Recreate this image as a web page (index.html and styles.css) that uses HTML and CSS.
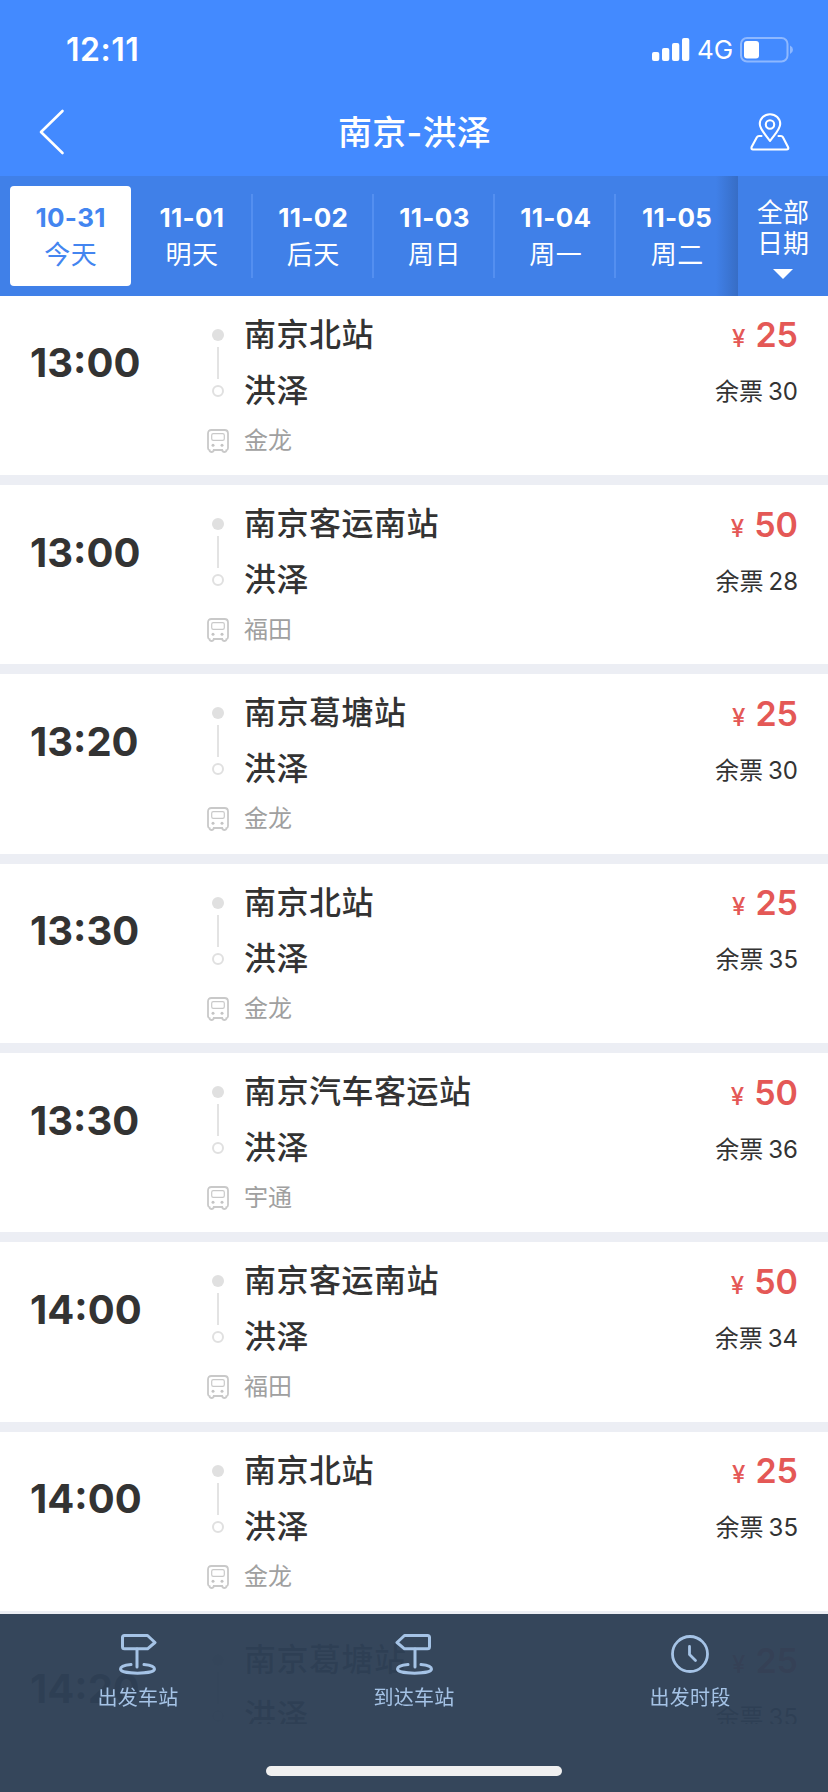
FILE: index.html
```
<!DOCTYPE html>
<html lang="zh-CN">
<head>
  <meta charset="UTF-8" />
  <meta name="viewport" content="width=device-width, initial-scale=1.0" />
  <title>南京-洪泽</title>
  <link rel="stylesheet" href="styles.css">
</head>
<body>
  <svg class="sprite">
    <symbol id="bus" viewBox="0 0 22 24">
      <path d="M4.500 1H17.500Q21 1 21 4.500V19Q21 21 19.300 21.300V22Q18.800 23 17.500 23Q15.500 23 15.200 21H6.800Q6.500 23 4.500 23Q3.200 23 2.700 22V21.300Q1 21 1 19V4.500Q1 1 4.500 1Z" fill="none" stroke="#c9c9c9" stroke-width="1.800" />
      <rect x="4.700" y="4.700" width="12.600" height="6.600" rx="1.600" fill="none" stroke="#c9c9c9" stroke-width="1.200" />
      <circle cx="6" cy="16.300" r="1.500" fill="#c4c4c4" />
      <circle cx="15" cy="16.300" r="1.500" fill="#c4c4c4" />
    </symbol>
    <symbol id="sign" viewBox="0 0 38 42">
      <g fill="none" stroke="#a5c3e6" stroke-width="3" stroke-linecap="round" stroke-linejoin="round">
        <path d="M5.500 2.500H28.500L36 9.500L28.500 15.800H5.500Q3.500 15.800 3.500 13.800V4.500Q3.500 2.500 5.500 2.500Z" />
        <path d="M18 16V34" />
        <path d="M12 31.500C5 32 1.500 34 1.500 36C1.500 38.500 9 40.200 18.500 40.200S35.500 38.500 35.500 36C35.500 34 32 32 25 31.500" />
      </g>
    </symbol>
  </svg>

  <header class="header">
    <div class="status">
      <span class="clock">12:11</span>
      <div class="status-right">
        <svg class="signal" width="38" height="24" viewBox="0 0 38 24" fill="#fff">
          <rect x="0" y="14" width="7.300" height="9" rx="2" />
          <rect x="10" y="10" width="7.300" height="13" rx="2" />
          <rect x="20" y="5" width="7.300" height="18" rx="2" />
          <rect x="30" y="0" width="7.300" height="23" rx="2" />
        </svg>
        <span class="network">4G</span>
        <svg class="battery" width="54" height="26" viewBox="0 0 54 26">
          <rect x="1" y="1" width="46.500" height="23.500" rx="6" fill="none" stroke="#8eb8ff" stroke-width="2" />
          <rect x="4" y="4" width="15" height="17.500" rx="3" fill="#fff" />
          <path d="M50 8.500Q53 10 53 12.800T50 17Z" fill="#8eb8ff" />
        </svg>
      </div>
    </div>
    <div class="nav">
      <svg class="back" width="26" height="46" viewBox="0 0 26 46">
        <path d="M23.500 2L2 23L23.500 44" fill="none" stroke="#fff" stroke-width="2.600" stroke-linecap="round" stroke-linejoin="round" />
      </svg>
      <h1 class="title">南京-洪泽</h1>
      <svg class="map" width="40" height="38" viewBox="0 0 40 38">
        <g fill="none" stroke="#fff" stroke-width="2.100" stroke-linejoin="round" stroke-linecap="round">
          <path d="M20 28C16 22 9.800 16.500 9.800 11A10.200 9.800 0 0 1 30.200 11C30.200 16.500 24 22 20 28Z" />
          <circle cx="20" cy="11.500" r="4.200" />
          <path d="M11.500 23H9Q7.500 23 7 24L1.600 34Q1 36.500 3 36.500H36.500Q39 36.500 38 34L32.800 24Q32.300 23 31 23H28.500" />
        </g>
      </svg>
    </div>
  </header>

  <div class="dates">
    <div class="date-list">
      <div class="date active"><b>10-31</b><span>今天</span></div>
      <div class="date"><b>11-01</b><span>明天</span></div>
      <div class="date"><b>11-02</b><span>后天</span></div>
      <div class="date"><b>11-03</b><span>周日</span></div>
      <div class="date"><b>11-04</b><span>周一</span></div>
      <div class="date"><b>11-05</b><span>周二</span></div>
    </div>
    <div class="all-dates">
      <span>全部</span>
      <span>日期</span>
      <i class="arrow"></i>
    </div>
  </div>

  <main class="list">
    <div class="card">
      <div class="time">13:00</div>
      <div class="route">
        <div class="line"><i class="dot"></i><i class="bar"></i><i class="ring"></i></div>
        <div class="stations"><p>南京北站</p><p>洪泽</p></div>
        <svg class="bus" width="22" height="24"><use href="#bus" /></svg>
        <div class="brand">金龙</div>
      </div>
      <div class="ticket"><div class="price"><small>¥</small>25</div><div class="left">余票<em>30</em></div></div>
    </div>

    <div class="card">
      <div class="time">13:00</div>
      <div class="route">
        <div class="line"><i class="dot"></i><i class="bar"></i><i class="ring"></i></div>
        <div class="stations"><p>南京客运南站</p><p>洪泽</p></div>
        <svg class="bus" width="22" height="24"><use href="#bus" /></svg>
        <div class="brand">福田</div>
      </div>
      <div class="ticket"><div class="price"><small>¥</small>50</div><div class="left">余票<em>28</em></div></div>
    </div>

    <div class="card">
      <div class="time">13:20</div>
      <div class="route">
        <div class="line"><i class="dot"></i><i class="bar"></i><i class="ring"></i></div>
        <div class="stations"><p>南京葛塘站</p><p>洪泽</p></div>
        <svg class="bus" width="22" height="24"><use href="#bus" /></svg>
        <div class="brand">金龙</div>
      </div>
      <div class="ticket"><div class="price"><small>¥</small>25</div><div class="left">余票<em>30</em></div></div>
    </div>

    <div class="card">
      <div class="time">13:30</div>
      <div class="route">
        <div class="line"><i class="dot"></i><i class="bar"></i><i class="ring"></i></div>
        <div class="stations"><p>南京北站</p><p>洪泽</p></div>
        <svg class="bus" width="22" height="24"><use href="#bus" /></svg>
        <div class="brand">金龙</div>
      </div>
      <div class="ticket"><div class="price"><small>¥</small>25</div><div class="left">余票<em>35</em></div></div>
    </div>

    <div class="card">
      <div class="time">13:30</div>
      <div class="route">
        <div class="line"><i class="dot"></i><i class="bar"></i><i class="ring"></i></div>
        <div class="stations"><p>南京汽车客运站</p><p>洪泽</p></div>
        <svg class="bus" width="22" height="24"><use href="#bus" /></svg>
        <div class="brand">宇通</div>
      </div>
      <div class="ticket"><div class="price"><small>¥</small>50</div><div class="left">余票<em>36</em></div></div>
    </div>

    <div class="card">
      <div class="time">14:00</div>
      <div class="route">
        <div class="line"><i class="dot"></i><i class="bar"></i><i class="ring"></i></div>
        <div class="stations"><p>南京客运南站</p><p>洪泽</p></div>
        <svg class="bus" width="22" height="24"><use href="#bus" /></svg>
        <div class="brand">福田</div>
      </div>
      <div class="ticket"><div class="price"><small>¥</small>50</div><div class="left">余票<em>34</em></div></div>
    </div>

    <div class="card">
      <div class="time">14:00</div>
      <div class="route">
        <div class="line"><i class="dot"></i><i class="bar"></i><i class="ring"></i></div>
        <div class="stations"><p>南京北站</p><p>洪泽</p></div>
        <svg class="bus" width="22" height="24"><use href="#bus" /></svg>
        <div class="brand">金龙</div>
      </div>
      <div class="ticket"><div class="price"><small>¥</small>25</div><div class="left">余票<em>35</em></div></div>
    </div>

    <div class="card">
      <div class="time">14:20</div>
      <div class="route">
        <div class="line"><i class="dot"></i><i class="bar"></i><i class="ring"></i></div>
        <div class="stations"><p>南京葛塘站</p><p>洪泽</p></div>
      </div>
      <div class="ticket"><div class="price"><small>¥</small>25</div><div class="left">余票<em>35</em></div></div>
    </div>
  </main>

  <!-- filter bar over the list -->
  <footer class="filters">
    <div class="filter-row">
      <div class="filter">
        <svg width="38" height="42"><use href="#sign" /></svg>
        <span>出发车站</span>
      </div>
      <div class="filter">
        <svg class="flip" width="38" height="42"><use href="#sign" /></svg>
        <span>到达车站</span>
      </div>
      <div class="filter">
        <svg width="38" height="42" viewBox="0 0 38 42" fill="none" stroke="#a5c3e6" stroke-width="2.800" stroke-linecap="round" stroke-linejoin="round">
          <circle cx="19" cy="21" r="17.500" />
          <path d="M18.500 13.500V21.500L24.500 27.500" />
        </svg>
        <span>出发时段</span>
      </div>
    </div>
    <div class="home-bar"></div>
  </footer>
</body>
</html>
```
FILE: styles.css
```
* { margin: 0; padding: 0; box-sizing: border-box; }
body {
  width: 828px;
  height: 1792px;
  overflow: hidden;
  font-family: Inter, "Noto Sans CJK SC", sans-serif;
  background: #fff;
  color: #333;
}
i, em { font-style: normal; }
svg { display: block; }
.sprite { display: none; }

.header {
  height: 176px;
  background: #438aff;
  color: #fff;
}
.status {
  display: flex;
  justify-content: space-between;
  height: 88px;
  padding: 29px 34px 0 66px;
}
.clock {
  font-size: 32px;
  font-weight: 600;
  line-height: 42px;
  letter-spacing: 0.5px;
}
.status-right {
  display: flex;
  align-items: flex-start;
  padding-top: 8px;
}
.signal { margin-top: 1px; }
.network {
  width: 50px;
  text-align: center;
  font-size: 26px;
  line-height: 26px;
}
.nav {
  display: flex;
  justify-content: space-between;
  align-items: center;
  height: 88px;
  padding: 0 38px 0 39px;
}
.back { margin-top: -1px; }
.title {
  padding: 2px 0 0 14px;
  font-size: 34px;
  font-weight: 500;
  line-height: 50px;
  letter-spacing: 0.3px;
}
.map { margin-top: 0; }

.dates {
  display: flex;
  height: 120px;
  background: #4080e8;
  color: #fff;
}
.date-list {
  display: flex;
  width: 738px;
  padding: 10px 0 10px 10px;
  background: linear-gradient(to left, #376dc5, rgba(64, 128, 232, 0) 22px);
}
.date {
  display: flex;
  flex-direction: column;
  align-items: center;
  flex: 0 0 121.3px;
  padding-top: 16px;
  background: linear-gradient(#548ff0, #548ff0) right center / 2px 84px no-repeat;
}
.date:nth-child(-n+1), .date:last-child { background: none; }
.date b {
  font-size: 26px;
  font-weight: 700;
  line-height: 32px;
  letter-spacing: 0.3px;
}
.date span {
  margin-top: 3px;
  font-size: 26px;
  line-height: 36px;
  letter-spacing: 0.5px;
}
.date.active {
  background: #fff;
  border-radius: 4px;
  color: #4385f0;
}
.all-dates {
  display: flex;
  flex-direction: column;
  align-items: center;
  width: 90px;
  padding-top: 21px;
}
.all-dates span {
  font-size: 26px;
  line-height: 31px;
}
.arrow {
  margin-top: 10px;
  border: 10px solid transparent;
  border-top-color: #fff;
  border-bottom: 0;
}

.list {
  height: 1428px;
  margin-top: -0.3px;
  overflow: hidden;
  background: #eceef4;
}
.card {
  display: flex;
  height: 179.35px;
  margin-bottom: 10px;
  padding: 0 30px;
  background: #fff;
}
.time {
  width: 176px;
  padding-top: 42.5px;
  font-size: 40px;
  font-weight: 700;
  line-height: 50px;
}
.route {
  display: grid;
  grid-template-columns: 24px 1fr;
  grid-template-rows: 122px 44px;
  column-gap: 14px;
  flex: 1;
}
.line {
  display: flex;
  flex-direction: column;
  align-items: center;
  padding-top: 33px;
}
.dot {
  width: 12px;
  height: 12px;
  border-radius: 50%;
  background: #e0e0e0;
}
.bar {
  width: 2px;
  height: 32px;
  margin: 6px 0;
  background: #e3e3e3;
}
.ring {
  width: 12px;
  height: 12px;
  border: 2px solid #e0e0e0;
  border-radius: 50%;
}
.stations { padding-top: 11px; }
.stations p {
  font-size: 32px;
  font-weight: 500;
  line-height: 56px;
  letter-spacing: 0.5px;
}
.bus {
  justify-self: center;
  margin-top: 11px;
}
.brand {
  padding-top: 1px;
  color: #a0a0a0;
  font-size: 24px;
  line-height: 44px;
}
.ticket {
  padding-top: 18.5px;
  text-align: right;
}
.price {
  color: #e45856;
  font-size: 34px;
  font-weight: 600;
  line-height: 42px;
}
.price small {
  margin-right: 10px;
  font-size: 24px;
  font-weight: 500;
}
.left {
  margin-top: 12px;
  font-size: 24px;
  line-height: 40px;
}
.left em { margin-left: 5px; }

.filters {
  position: fixed;
  left: 0;
  bottom: 0;
  width: 828px;
  height: 178px;
  background: rgba(46, 64, 86, 0.97);
  color: #a5c3e6;
}
.filter-row {
  display: flex;
  height: 152px;
  padding-top: 19px;
}
.filter {
  display: flex;
  flex-direction: column;
  align-items: center;
  flex: 1;
}
.filter span {
  margin-top: 8px;
  font-size: 20px;
  line-height: 30px;
  letter-spacing: 0.2px;
}
.flip { transform: scaleX(-1); }
.home-bar {
  width: 296px;
  height: 10px;
  margin: 0 auto;
  border-radius: 5px;
  background: #f0f0f0;
}
```
